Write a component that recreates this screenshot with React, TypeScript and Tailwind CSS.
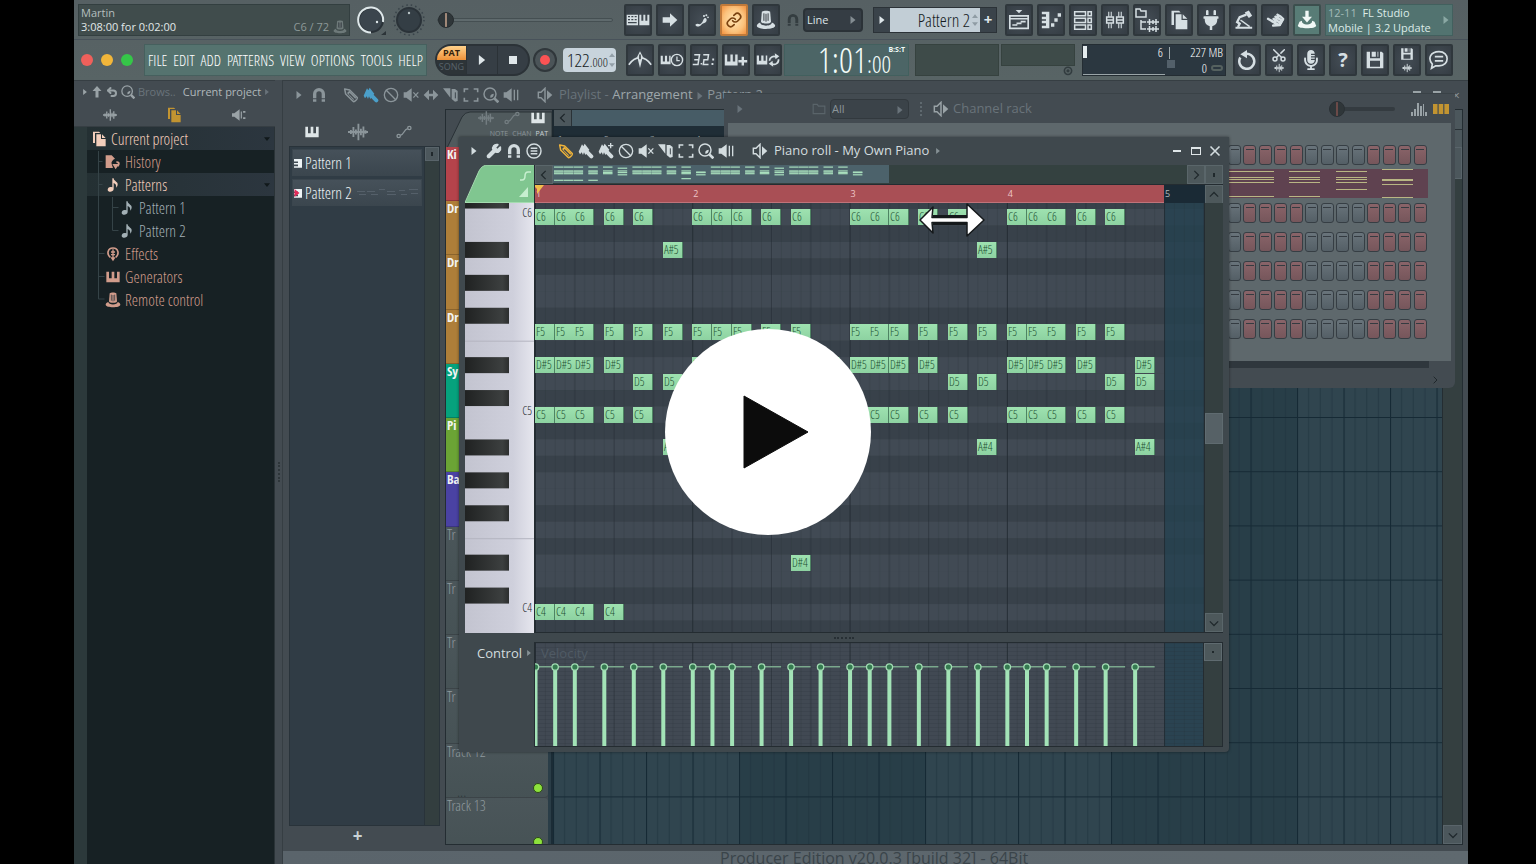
import React from "react";
import { Link, Wrench, Ban, Scissors, Undo2 } from "lucide-react";
import { FaMicrophoneAlt, FaPlug, FaHandPointer } from "react-icons/fa";

type IconProps = { className?: string };

function Svg({ className = "size-4", box = "0 0 24 24", children }: IconProps & { box?: string; children: React.ReactNode }) {
  return (
    <svg viewBox={box} className={className} fill="currentColor" aria-hidden="true">
      {children}
    </svg>
  );
}

/* ---------- icons ---------- */
const Keys = ({ className }: IconProps) => (
  <Svg className={className}><path d="M2 4h4v10h4V4h4v10h4V4h4v16H2z" /></Svg>
);
const Caret = ({ className = "size-2" }: IconProps) => (
  <Svg className={className} box="0 0 8 8"><path d="M1.500 0L6.500 4l-5 4z" /></Svg>
);
const Magnet = ({ className }: IconProps) => (
  <Svg className={className}><path d="M5.500 17v-6.500a6.500 6.500 0 0 1 13 0V17" fill="none" stroke="currentColor" strokeWidth="5" /><path d="M3 18.500h5V22H3zM16 18.500h5V22h-5z" /></Svg>
);
const Wave = ({ className }: IconProps) => (
  <Svg className={className}><path d="M0 12h24M3.500 9.500v5M6.500 6v12M9.500 9v6M12.500 2v20M15.500 8v8M18.500 5.500v13M21 10v4" stroke="currentColor" strokeWidth="2.200" /></Svg>
);
const Curve = ({ className }: IconProps) => (
  <Svg className={className}><g fill="none" stroke="currentColor" strokeWidth="2"><circle cx="4" cy="18" r="2.500" /><circle cx="20" cy="6" r="2.500" /><path d="M6.500 17C13 15 11 9 17.500 7" /></g></Svg>
);
const Files = ({ className }: IconProps) => (
  <Svg className={className}><path d="M3 1h9l2 2H6v15H3zM8 5h7v7h7v11H8zM16.500 5L22 10.500h-5.500z" /></Svg>
);
const Note = ({ className }: IconProps) => (
  <Svg className={className}><path d="M11 2h2c0 4 6 5 6 9 0 2-1 4-2 5 0-4-1-6-4-7v9c0 3-3 4-5 4s-4-1-4-3 2-4 4-4c1 0 2 0 3 .5z" /></Svg>
);
const Pencil = ({ className }: IconProps) => (
  <Svg className={className}><path d="M2.500 3l7.500 1.500 11 11c2 2-4 8-6 6l-11-11z" fill="none" stroke="currentColor" strokeWidth="2.200" strokeLinejoin="round" /><path d="M6 9L9.500 5.500 20 16l-1.500 1.500L10 9l-1.500 1.500 8 8-1 1z" /></Svg>
);
const Brush = ({ className, plus = false }: IconProps & { plus?: boolean }) => (
  <Svg className={className}><path d="M1 13L6 2l2 3 2-4 7 9-6 8-2-4-1.500 4-2-4L3 17z" /><path d="M13 13l7 7" stroke="currentColor" strokeWidth="6" strokeLinecap="round" />{plus && <path d="M18 0h2v3h3v2h-3v3h-2V5h-3V3h3z" />}</Svg>
);
const Speaker = ({ className, bars = false, cross = false }: IconProps & { bars?: boolean; cross?: boolean }) => (
  <Svg className={className}><path d="M1 8h4l8-6v20l-8-6H1z" />{bars && <path d="M16 4h2v16h-2zM21 4h2v16h-2z" />}{cross && <path d="M15.500 8L23 16M23 8l-7.500 8" stroke="currentColor" strokeWidth="2" />}</Svg>
);
const SpeakerOut = ({ className }: IconProps) => (
  <Svg className={className}><path d="M2 8h4l6-6v20l-6-6H2z" fill="none" stroke="currentColor" strokeWidth="2.200" /><path d="M15 5l8 7-8 7z" /></Svg>
);
const SlipArrow = ({ className }: IconProps) => (
  <Svg className={className}><path d="M1 12l8-8v6h6V4l8 8-8 8v-6H9v6z" /></Svg>
);
const Slice = ({ className }: IconProps) => (
  <Svg className={className}><path d="M0 2h11v14zM13 3h5l4 3v15l-4 1-5-4z" /><path d="M18.500 8v9" stroke="#3f484d" strokeWidth="1.500" /></Svg>
);
const Marquee = ({ className }: IconProps) => (
  <Svg className={className}><path d="M2 8V3h6M16 3h6v5M22 16v5h-6M8 21H2v-5" fill="none" stroke="currentColor" strokeWidth="2.400" /></Svg>
);
const Lens = ({ className }: IconProps) => (
  <Svg className={className}><circle cx="10.500" cy="10.500" r="9" fill="none" stroke="currentColor" strokeWidth="2.200" /><path d="M11 16a5 5 0 0 0 5-6l-3 1-2 2z" /><path d="M17 17l6 6" stroke="currentColor" strokeWidth="4" /></Svg>
);
const MenuRound = ({ className }: IconProps) => (
  <Svg className={className}><g fill="none" stroke="currentColor" strokeWidth="2.200"><circle cx="12" cy="12" r="10.500" /><path d="M7 8h10M7 12h10M7 16h10" /></g></Svg>
);
const Hat = ({ className }: IconProps) => (
  <Svg className={className}><path d="M7 2c2-1.500 8-1.500 10 0l1 12c0 3-12 3-12 0z" /><path d="M5 15c0 5 14 5 14 0 3 1 4 3 4 4 0 5-22 5-22 0 0-1 1-3 4-4z" /><path d="M9.500 4v9M12 4.500v9.500M14.500 4v9" stroke="#343b41" strokeWidth="1.200" /></Svg>
);
const Arrow = ({ className }: IconProps) => (
  <Svg className={className}><path d="M1 8h11V2l11 10-11 10v-6H1z" /></Svg>
);
const TypingKeys = ({ className }: IconProps) => (
  <Svg className={className} box="0 0 36 24"><path d="M1 4h17v16H1zM3 6v2h3V6zm5 0v2h3V6zm5 0v2h3V6zM3 10.500v2h3v-2zm5 0v2h3v-2zm5 0v2h3v-2zM3 15v2h13v-2z" fillRule="evenodd" /><path d="M20 4h3v9h3V4h3v9h3V4h3v16H20z" /></Svg>
);
const Foot = ({ className }: IconProps) => (
  <Svg className={className}><path d="M2 19c4-3 6 1 9-2 3-2 2-6 5-8 3-1 4 3 2 6-2 2-5 2-7 4-2 3-8 4-9 0z" /><circle cx="15" cy="6" r="1.600" /><circle cx="18.500" cy="5" r="1.500" /><circle cx="21" cy="8" r="1.300" /></Svg>
);
const MetroArc = ({ className }: IconProps) => (
  <Svg className={className} box="0 0 30 24"><path d="M1 18C5 12 9 9 15 9s10 3 14 9" fill="none" stroke="currentColor" strokeWidth="2" /><path d="M15 1l3.500 7L15 22l-3.500-14z" /><path d="M14 5h2v6h-2z" fill="#343b41" /></Svg>
);
const KeysClock = ({ className }: IconProps) => (
  <Svg className={className} box="0 0 34 24"><path d="M1 6h3v8h3V6h3v8h3V6h2v12H1z" /><circle cx="24" cy="12" r="8" fill="none" stroke="currentColor" strokeWidth="2" /><path d="M24 7v6h4" fill="none" stroke="currentColor" strokeWidth="1.800" /></Svg>
);
const KeysPlus = ({ className }: IconProps) => (
  <Svg className={className} box="0 0 30 24"><path d="M1 5h3v9h4V5h3v9h3V5h3v14H1z" /><path d="M22 8h3v4h4v3h-4v4h-3v-4h-4v-3h4z" /></Svg>
);
const KeysLoop = ({ className }: IconProps) => (
  <Svg className={className} box="0 0 32 24"><path d="M1 6h3v7h3V6h3v7h3V6h2v12H1z" /><path d="M18 13a6 6 0 0 1 9-5M30 11a6 6 0 0 1-9 6" fill="none" stroke="currentColor" strokeWidth="2.200" /><path d="M25 3l6 4-5 4zM23 21l-6-4 5-4z" /></Svg>
);
const Countdown = ({ className }: IconProps) => (
  <Svg className={className} box="0 0 32 24"><path d="M3 5h7l-2 13H1M3 11.500h6M15 5h7l-1 6.500h-5L15 18h7" fill="none" stroke="currentColor" strokeWidth="2" /><path d="M11.500 16h2v2h-2zM27 10h2.500v2.500H27zM26 16h2.500v2.500H26z" /></Svg>
);
const PlaylistIcon = ({ className }: IconProps) => (
  <Svg className={className}><path d="M8 0h8l-4 4z" /><path d="M1 7h22v15H1zM1 10.500h22" fill="none" stroke="currentColor" strokeWidth="2" /><path d="M4 17h6v2H4zM9 15h6v2H9zM14 13h6v2h-6z" /></Svg>
);
const PianoRollIcon = ({ className }: IconProps) => (
  <Svg className={className}><path d="M1 2h9v20H1v-3h5v-3H1v-3h5v-2H1V8h5V5H1zM12 16h4v4h-4zM16 10h4v4h-4zM20 4h4v4h-4z" /></Svg>
);
const RackIcon = ({ className }: IconProps) => (
  <Svg className={className}><g fill="none" stroke="currentColor" strokeWidth="1.800"><path d="M2 2h13v5H2zM2 10h13v5H2zM2 18h13v5H2zM18 2h4v5h-4zM18 10h4v5h-4zM18 18h4v5h-4z" /></g></Svg>
);
const MixerIcon = ({ className }: IconProps) => (
  <Svg className={className}><path d="M4.500 2v6M7.500 2v6M4.500 16v6M7.500 16v6M16.500 2v6M19.500 2v6M16.500 16v6M19.500 16v6" stroke="currentColor" strokeWidth="1.300" /><path d="M2 8.500h8v7H2zM14 8.500h8v7h-8zM2 12h8M14 12h8" fill="none" stroke="currentColor" strokeWidth="1.800" /></Svg>
);
const TreeIcon = ({ className }: IconProps) => (
  <Svg className={className}><path d="M1 1h4l1 2h5v6H1z" fill="none" stroke="currentColor" strokeWidth="1.500" /><path d="M6 12v9h5M6 14h5" fill="none" stroke="currentColor" strokeWidth="1.500" /><path d="M14.500 11v6M18 12v4M21 11v6M12 14h12M14.500 18v6M18 19v4M21 18v6M12 21h12" stroke="currentColor" strokeWidth="1.500" /></Svg>
);
const Tapper = ({ className }: IconProps) => (
  <Svg className={className}><path d="M3 20h20v2.500H3zM14 3l5-2.500L23 7l-4 2.500z" /><path d="M16 5.500L8 8.500l-3 6 3 2-2 4" fill="none" stroke="currentColor" strokeWidth="2.800" /><path d="M9 12l11 8" stroke="currentColor" strokeWidth="1.800" /></Svg>
);
const Download = ({ className }: IconProps) => (
  <Svg className={className}><path d="M10 1h4v7h4l-6 7-6-7h4zM3 14l3-1c-1 6 13 6 12 0l3 1 2 5c0 4-22 4-22 0z" /></Svg>
);
const Disk = ({ className }: IconProps) => (
  <Svg className={className}><path d="M2 2h4v8h12V2h2l2 2v18H2zM8 2h5v6H8zM15 2h1v6h-1zM6 13v7h12v-7z" fillRule="evenodd" /></Svg>
);
const CutWave = () => (
  <span className="flex flex-col items-center">
    <Scissors className="size-4 -rotate-90" strokeWidth={2.200} />
    <Wave className="size-2.5" />
  </span>
);
const DiskWave = () => (
  <span className="flex flex-col items-center gap-0.5">
    <Disk className="size-3.5" />
    <Wave className="size-2.5" />
  </span>
);
const PlugIn = ({ className }: IconProps) => (
  <Svg className={className}><path d="M0 9h4l9-7v20l-9-7H0zM15 6h2v12h-2zM19 5h4v3h-4zM19 16h4v3h-4z" /></Svg>
);
const HistoryIcon = ({ className }: IconProps) => (
  <Svg className={className}><path d="M1 2h9l5 5c-4 2-6 5-5 8l2 6H1z" /><path d="M11 15l10 0-5 8zM17 11c5-1 7 4 3 8l-2-1c2-3 2-5-1-5z" /></Svg>
);
const EffectsIcon = ({ className }: IconProps) => (
  <Svg className={className}><path d="M8 17C2 12 4 3 12 3s10 9 4 14" fill="none" stroke="currentColor" strokeWidth="2.500" /><path d="M9 8h6v2H9zM9 12h6v2H9zM11 5h2v12h-2zM8 17h8l-4 6z" /></Svg>
);
const PatternIcon = ({ className }: IconProps) => (
  <Svg className={className} box="0 0 10 12"><path d="M0 1h10v11H0v-2h5V8H0V6h5V4H0z" /></Svg>
);
const ChevronGlyph = ({ className = "size-3", turn }: IconProps & { turn: "left" | "right" | "up" | "down" }) => {
  const d = { left: "M8 1L3 6l5 5", right: "M4 1l5 5-5 5", up: "M1 8l5-5 5 5", down: "M1 4l5 5 5-5" }[turn];
  return <Svg className={className} box="0 0 12 12"><path d={d} fill="none" stroke="currentColor" strokeWidth="1.500" /></Svg>;
};

/* ---------- toolbar ---------- */
function ToolButton({ label, tone = "dark", children }: { label: string; tone?: "dark" | "hot" | "teal"; children: React.ReactNode }) {
  const tones = {
    dark: "border-[#2f373c] bg-[radial-gradient(#444d55,#353d44)] text-[#d6dfe3]",
    hot: "border-[#c07a3a] bg-[radial-gradient(#ffe6b4,#fbc27c_60%,#f3923f)] text-[#7a4210]",
    teal: "border-[#3c4f4e] bg-[#587c76] text-[#f1f8f6]",
  };
  return (
    <button type="button" aria-label={label} title={label} className={"flex h-8 w-7 shrink-0 items-center justify-center overflow-hidden rounded-xs border-2 " + tones[tone]}>
      {children}
    </button>
  );
}

const menuItems = ["FILE", "EDIT", "ADD", "PATTERNS", "VIEW", "OPTIONS", "TOOLS", "HELP"];

function Toolbar() {
  return (
    <header className="h-20 shrink-0 overflow-hidden bg-linear-to-b from-[#566063] to-[#586465] text-[#dfe7ea]">
      <div className="flex h-10 items-center border-b border-[#48525a] pl-1">
        <div className="flex h-8 w-[272px] shrink-0 flex-col justify-center border border-[#333f40] bg-[#404c4c] px-0.5 text-[11px] leading-[14px]">
          <span className="text-[#b4bfbf]">Martin</span>
          <span className="flex items-center justify-between">
            <span className="text-[#e0e8e8]">3:08:00 for 0:02:00</span>
            <span className="flex items-center gap-1 text-[#8d9998]">C6 / 72 <Hat className="size-3.5 text-[#6d7979]" /></span>
          </span>
        </div>
        <div className="flex w-[84px] shrink-0 items-center gap-1.5 pl-[5px]">
          <svg viewBox="0 0 32 32" className="size-8" role="img" aria-label="Master volume">
            <circle cx="16" cy="16" r="12" fill="#3b454d" stroke="#2a3238" strokeWidth="2" />
            <path d="M16 28.500A12.500 12.500 0 1 1 28 18" fill="none" stroke="#dfe8ea" strokeWidth="2" />
            <circle cx="22" cy="18" r="1.200" fill="#dfe8ea" />
            <path d="M31 27v4h-5z" fill="#2c3438" />
          </svg>
          <svg viewBox="0 0 32 32" className="size-8" role="img" aria-label="Master pitch">
            <circle cx="16" cy="16" r="15" fill="none" stroke="#39434a" strokeWidth="1.500" strokeDasharray="1.500 3" />
            <circle cx="16" cy="16" r="12" fill="#343e45" stroke="#2a3238" strokeWidth="2" />
            <circle cx="16" cy="9" r="1.200" fill="#b9c4c6" />
          </svg>
        </div>
        <div className="flex w-[190px] shrink-0 items-center pl-[3px]">
          <input type="range" aria-label="Song position" defaultValue={0} className="h-1 w-[176px] appearance-none rounded border border-[#454f52] bg-[#5f6a6d] [&::-webkit-slider-thumb]:size-4 [&::-webkit-slider-thumb]:appearance-none [&::-webkit-slider-thumb]:rounded-full [&::-webkit-slider-thumb]:border [&::-webkit-slider-thumb]:border-[#252b2e] [&::-webkit-slider-thumb]:bg-[linear-gradient(90deg,#2f3639_44%,#a08878_44%,#a08878_56%,#2f3639_56%)]" />
        </div>
        <div className="flex shrink-0 gap-1">
          <ToolButton label="Typing keyboard to piano"><TypingKeys className="h-5 w-6" /></ToolButton>
          <ToolButton label="Auto scroll"><Arrow className="size-4" /></ToolButton>
          <ToolButton label="Step edit"><Foot className="size-4" /></ToolButton>
          <ToolButton label="Link notes" tone="hot"><Link className="size-4" strokeWidth={2.500} /></ToolButton>
          <ToolButton label="Multilink controllers"><Hat className="size-5" /></ToolButton>
        </div>
        <Magnet className="ml-1.5 size-3.5 shrink-0 text-[#343d40]" />
        <div className="relative ml-[3px] h-6 w-[60px] shrink-0 rounded-sm border-2 border-[#2b3237] bg-[#353d44] text-[11px]">
          <select aria-label="Global snap" className="h-full w-full appearance-none bg-transparent pl-0.5 leading-4 text-[#dfe7ea] outline-none">
            <option>Line</option>
          </select>
          <Caret className="pointer-events-none absolute top-1.5 right-1 size-2 text-[#848d92]" />
        </div>
        <div className="ml-2.5 flex h-[26px] w-[124px] shrink-0 items-stretch border border-[#2b3237] bg-[#3a434a]">
          <button type="button" aria-label="Previous pattern" className="flex w-4 items-center justify-center"><Caret /></button>
          <label className="flex min-w-0 flex-1 items-center bg-[#c2ced6] text-[#151c22]">
            <span className="sr-only">Pattern</span>
            <input defaultValue="Pattern 2" className="h-6 w-full min-w-0 bg-transparent text-right font-['Open_Sans_Condensed_Light','Open_Sans_Condensed','Open_Sans',sans-serif] text-[18px] leading-6 font-light outline-none" />
            <span className="flex w-2.5 shrink-0 flex-col items-center gap-0.5 text-[#8f9ca4]"><Caret className="size-1.5 -rotate-90" /><Caret className="size-1.5 rotate-90" /></span>
          </label>
          <button type="button" aria-label="Add pattern" className="flex w-4 items-center justify-center text-[15px] font-bold">+</button>
        </div>
        <div className="ml-2 flex shrink-0 gap-1">
          <ToolButton label="Playlist"><PlaylistIcon className="size-5" /></ToolButton>
          <ToolButton label="Piano roll"><PianoRollIcon className="size-5" /></ToolButton>
          <ToolButton label="Channel rack"><RackIcon className="size-5" /></ToolButton>
          <ToolButton label="Mixer"><MixerIcon className="size-5" /></ToolButton>
          <ToolButton label="Browser"><TreeIcon className="size-6" /></ToolButton>
          <ToolButton label="Project picker"><Files className="size-5" /></ToolButton>
          <ToolButton label="Plugin picker"><FaPlug className="size-5" /></ToolButton>
          <ToolButton label="Tempo tapper"><Tapper className="size-5" /></ToolButton>
          <ToolButton label="Touch controller"><FaHandPointer className="size-4 rotate-[-60deg]" /></ToolButton>
          <ToolButton label="Download" tone="teal"><Download className="size-5" /></ToolButton>
        </div>
        <button type="button" className="ml-1 flex h-8 w-32 shrink-0 items-center border border-[#42605e] bg-[#527370] px-0.5 text-left text-[11px] leading-[15px] text-[#dcebe8]">
          <span className="flex-1 whitespace-nowrap"><span className="text-[#a3bbb8]">12-11</span>&nbsp; FL Studio<br />Mobile | 3.2 Update</span>
          <Caret className="size-2 text-[#8aa8a4]" />
        </button>
      </div>
      <div className="flex h-10 items-center">
        <div className="flex w-[70px] shrink-0 gap-2 pl-[7px]">
          <button type="button" aria-label="Close" className="size-3 rounded-full bg-[#f0605b]" />
          <button type="button" aria-label="Minimize" className="size-3 rounded-full bg-[#f2b63a]" />
          <button type="button" aria-label="Zoom" className="size-3 rounded-full bg-[#35c648]" />
        </div>
        <nav className="flex h-8 w-[283px] shrink-0 items-center justify-between border border-[#46605e] bg-[#55736f] px-[3px] font-['Open_Sans_Condensed_Light','Open_Sans_Condensed','Open_Sans',sans-serif] text-[15px] font-light text-white">
          {menuItems.map((m) => <button key={m} type="button">{m}</button>)}
        </nav>
        <div className="ml-2 flex h-8 w-[95px] shrink-0 overflow-hidden rounded-full border-2 border-[#2b3237] bg-[#363e45]">
          <div className="flex w-[30px] flex-col border-r border-[#2b3237] text-center text-[9px] leading-[14px]">
            <button type="button" className="flex-1 bg-linear-to-b from-[#ffd28a] to-[#ee9136] font-bold text-[#35220d]">PAT</button>
            <button type="button" className="flex-1 bg-[#2d3438] text-[#59636a]">SONG</button>
          </div>
          <button type="button" aria-label="Play" className="flex flex-1 items-center justify-center border-r border-[#2b3237]"><Caret className="size-2.5" /></button>
          <button type="button" aria-label="Stop" className="flex flex-1 items-center justify-center"><span className="size-2 bg-[#dfe7ea]" /></button>
        </div>
        <button type="button" aria-label="Record" className="ml-[3px] flex size-6 shrink-0 items-center justify-center rounded-full border-2 border-[#30373b] bg-[#4b5458]"><span className="size-2.5 rounded-full bg-[#fb5354]" /></button>
        <div role="spinbutton" aria-label="Tempo" aria-valuenow={122} className="ml-[6px] flex h-6 w-[53px] shrink-0 items-center justify-end rounded-sm bg-[#c8d4dc] font-['Open_Sans_Condensed_Light','Open_Sans_Condensed','Open_Sans',sans-serif] font-light text-[#151c22]">
          <span className="text-[19px] leading-5">122</span><span className="pt-1 text-[13px] leading-5">.000</span>
          <span className="flex w-2 flex-col items-center gap-1 text-[#93a0a8]"><Caret className="size-1.5 -rotate-90" /><Caret className="size-1.5 rotate-90" /></span>
        </div>
        <div className="ml-2.5 flex shrink-0 gap-1">
          <ToolButton label="Metronome"><MetroArc className="h-5 w-6" /></ToolButton>
          <ToolButton label="Wait for input"><KeysClock className="h-5 w-6" /></ToolButton>
          <ToolButton label="Countdown"><Countdown className="h-5 w-6" /></ToolButton>
          <ToolButton label="Blend recording"><KeysPlus className="h-5 w-6" /></ToolButton>
          <ToolButton label="Loop recording"><KeysLoop className="h-5 w-6" /></ToolButton>
        </div>
        <div className="ml-0.5 flex h-8 w-[125px] shrink-0 justify-end border border-[#42605e] bg-[#4c6566] pr-[3px] font-['Open_Sans_Condensed_Light','Open_Sans_Condensed','Open_Sans',sans-serif] leading-[30px] font-light text-[#f1fbf8]">
          <span className="text-[35px]">1:01</span>
          <span className="relative w-[38px] pt-1 text-[24px]">:00<span className="absolute top-0 right-0 font-['Open_Sans',sans-serif] text-[7px] leading-[10px] font-bold">B:S:T</span></span>
        </div>
        <div className="ml-1.5 h-8 w-[84px] shrink-0 border border-[#36423f] bg-[#3e4b49]" />
        <div className="ml-0.5 flex h-8 w-[74px] shrink-0 flex-col items-end">
          <div className="h-[23px] w-full border border-[#36423f] bg-[#3e4b49]" />
          <Svg className="mr-0.5 size-2.5 text-[#323c3f]"><circle cx="12" cy="12" r="9" fill="none" stroke="currentColor" strokeWidth="4" /><circle cx="12" cy="12" r="4" /></Svg>
        </div>
        <div className="ml-[7px] flex h-8 w-[144px] shrink-0 border border-[#242d33] bg-[#2b3740] font-['Open_Sans_Condensed_Light','Open_Sans_Condensed','Open_Sans',sans-serif] text-[13px] leading-[15px] text-white">
          <div className="flex w-[82px] justify-between border-b border-[#9aa5a8] pr-0.5"><span className="mt-px h-3 w-1 bg-[#e5ecee]" /><span>6</span></div>
          <div className="flex flex-1 flex-col pr-0.5">
            <span className="flex justify-between pl-1"><span className="mt-0.5 h-3 w-px bg-[#a0abad]" />227 MB</span>
            <span className="flex items-center justify-between pl-0.5"><span className="mb-2 size-2 bg-[#53606a]" /><span className="flex items-center gap-1">0<span className="h-1.5 w-3 rounded-full border-2 border-[#55615f]" /></span></span>
          </div>
        </div>
        <div className="ml-[7px] flex shrink-0 gap-1">
          <ToolButton label="Undo"><Svg className="size-5"><path d="M9 5a9 9 0 1 1-5 4" fill="none" stroke="currentColor" strokeWidth="3" /><path d="M12 0v10L4 5z" /></Svg></ToolButton>
          <ToolButton label="Cut"><CutWave /></ToolButton>
          <ToolButton label="Audio recording"><FaMicrophoneAlt className="size-5" /></ToolButton>
          <ToolButton label="Help"><span className="text-[20px] font-bold">?</span></ToolButton>
          <ToolButton label="Save"><Disk className="size-5" /></ToolButton>
          <ToolButton label="Export wave"><DiskWave /></ToolButton>
          <ToolButton label="Comments"><Svg className="size-5"><path d="M12 2c13 0 13 17 0 17-2 0-3 0-4 0l-5 3 1-5C-2 10 2 2 12 2zM7 8h10M7 13h10" fill="none" stroke="currentColor" strokeWidth="2" /></Svg></ToolButton>
        </div>
      </div>
    </header>
  );
}

/* ---------- browser ---------- */
const tree = [
  { name: "Current project", Icon: Files, pad: "pl-1", tone: "text-[#f3cebb]", open: true },
  { name: "History", Icon: HistoryIcon, pad: "pl-[18px]", tone: "text-[#d19c8b]", open: false },
  { name: "Patterns", Icon: Note, pad: "pl-[18px]", tone: "text-[#f3cebb]", open: true },
  { name: "Pattern 1", Icon: Note, pad: "pl-8", tone: "text-[#a3b0b5]", open: false },
  { name: "Pattern 2", Icon: Note, pad: "pl-8", tone: "text-[#a3b0b5]", open: false },
  { name: "Effects", Icon: EffectsIcon, pad: "pl-[18px]", tone: "text-[#d19c8b]", open: false },
  { name: "Generators", Icon: Keys, pad: "pl-[18px]", tone: "text-[#d19c8b]", open: false },
  { name: "Remote control", Icon: Hat, pad: "pl-[18px]", tone: "text-[#d19c8b]", open: false },
];

function Browser() {
  return (
    <aside className="flex w-[201px] shrink-0 flex-col bg-[#172124]">
      <div className="h-[47px] border-t border-b border-[#363e43] bg-[#434b51] text-[#9aa3a7]">
        <div className="flex h-[22px] items-center gap-[3px] pl-2 text-[11px]">
          <Caret className="size-1.5" />
          <Svg className="size-3"><path d="M12 0l9 10h-6v13H9V10H3z" /></Svg>
          <Undo2 className="size-3" strokeWidth={4} />
          <Lens className="size-3.5" />
          <span className="text-[#69737a]">Brows..</span>
          <span className="ml-1 text-[#b0b8bb]">Current project</span>
          <Caret className="size-1.5 text-[#69737a]" />
        </div>
        <div className="flex h-6 items-center justify-around px-1">
          <button type="button" aria-label="All"><Wave className="size-3.5" /></button>
          <button type="button" aria-label="Current project"><Files className="size-4 text-[#c29431]" /></button>
          <button type="button" aria-label="Plugins"><PlugIn className="size-3.5" /></button>
        </div>
      </div>
      <div className="flex flex-1 border-r border-[#2a3337]">
        <div className="w-[13px] shrink-0 bg-[#2c393b]" />
        <ul className="relative flex-1 font-['Open_Sans_Condensed_Light','Open_Sans_Condensed','Open_Sans',sans-serif] text-[16px] font-light">
          <svg viewBox="0 0 40 184" className="absolute top-0 left-0 h-[184px] w-10" fill="none" stroke="#354347" aria-hidden="true">
            <path d="M11.500 24v148h6M11.500 126.500h6M11.500 149.500h6M11.500 34.500h4M11.500 57.500h4M25.500 70v33.500h6M25.500 80.500h6" />
          </svg>
          {tree.map(({ name, Icon, pad, tone, open }) => (
            <li key={name} className={"flex h-[23px] items-center gap-1 pr-1 " + pad + " " + tone + (open ? " bg-linear-to-r from-[#243033] to-[#2c363f]" : "")}>
              <Icon className="size-4 shrink-0" />
              <span className="flex-1">{name}</span>
              {open && <Caret className="size-1.5 rotate-90 text-[#11191b]" />}
            </li>
          ))}
        </ul>
      </div>
    </aside>
  );
}

/* ---------- playlist ---------- */
const tracks = [
  { name: "Ki", color: "bg-[#b5434b]" },
  { name: "Dr", color: "bg-[#ae7e39]" },
  { name: "Dr", color: "bg-[#ae7e39]" },
  { name: "Dr", color: "bg-[#ae7e39]" },
  { name: "Sy", color: "bg-[#06a27d]" },
  { name: "Pi", color: "bg-[#6ba435]" },
  { name: "Ba", color: "bg-[#4a42a3]" },
  { name: "Tr", color: "" },
  { name: "Tr", color: "" },
  { name: "Tr", color: "" },
  { name: "Tr", color: "" },
  { name: "Track 12", color: "" },
  { name: "Track 13", color: "" },
];

function PlaylistGrid() {
  return (
    <svg className="h-full w-full" aria-hidden="true">
      <defs>
        <pattern id="pl-bars" width="46.500" height="54.200" patternUnits="userSpaceOnUse">
          <path d="M11.600 0v54M23.200 0v54M34.900 0v54" stroke="#1f343f" strokeOpacity=".7" />
          <path d="M.5 0v54.200M0 53.700h46.500" stroke="#162a35" strokeWidth="1.200" />
        </pattern>
        <pattern id="pl-shade" width="372" height="54" patternUnits="userSpaceOnUse">
          <rect width="372" height="54" fill="#30454f" /><rect x="186" width="186" height="54" fill="#283e48" />
        </pattern>
      </defs>
      <rect width="100%" height="100%" fill="url(#pl-shade)" />
      <rect width="100%" height="100%" fill="url(#pl-bars)" />
    </svg>
  );
}

function Playlist() {
  return (
    <section aria-label="Playlist" className="flex min-h-0 flex-1 flex-col border-t border-[#363e43] bg-[#434b51] text-[#8b959a]">
      <div className="flex h-7 shrink-0 items-center pl-3 text-[13px]">
        <Caret className="mr-2 size-2" />
        <Magnet className="mr-4 size-4" />
        <span className="flex gap-1">
          <Pencil /><Brush className="size-4 text-[#4b9fc9]" /><Ban className="size-4" /><Speaker cross /><SlipArrow /><Slice /><Marquee /><Lens /><Speaker bars />
        </span>
        <SpeakerOut className="mr-1.5 ml-[18px] size-4" />
        <h2 className="flex-1 whitespace-nowrap"><span className="text-[#69737a]">Playlist - </span><span className="text-[#9ea7ab]">Arrangement</span> <Caret className="inline size-2 text-[#69737a]" /> <span className="text-[#8b959a]">Pattern 2</span></h2>
        <span className="flex gap-3 pr-2"><span className="mt-0.5 h-0.5 w-2 bg-[#9aa3a7]" /><span className="mt-0.5 h-0.5 w-2 bg-[#9aa3a7]" /><span className="h-3 leading-3">×</span></span>
      </div>
      <div className="flex min-h-0 flex-1 pr-[5px] pl-1.5">
        <div className="flex w-[151px] shrink-0 flex-col">
          <div className="flex h-[37px] items-center gap-7 pt-2 pl-[15px]">
            <Keys className="size-4 text-[#dfe6e8]" /><Wave className="size-5" /><Curve className="size-4" />
          </div>
          <div className="flex flex-1 border border-[#29333a] bg-[#303c45]">
            <ul className="flex flex-1 flex-col gap-[3px] border-r border-[#29333a] p-0.5 font-['Open_Sans_Condensed_Light','Open_Sans_Condensed','Open_Sans',sans-serif] text-[16px] font-light text-[#eef4f6]">
              {["Pattern 1", "Pattern 2"].map((p, i) => (
                <li key={p}>
                  <button type="button" className="relative flex h-[27px] w-full items-center gap-[3px] border border-[#3b464e] bg-linear-to-b from-[#46515a] to-[#3b464e] pl-px">
                    <PatternIcon className="h-2.5 w-2" />
                    {i === 1 && <Caret className="absolute left-0 h-3 w-2 text-[#e32b5a]" />}
                    {p}
                    {i === 1 && <Svg className="absolute right-0 h-6 w-16 text-[#55606a]" box="0 0 64 24"><path d="M0 10h8v1H0zM10 10h8v1h-8zM22 8h6v1h-6zM30 10h8v1h-8zM42 9h6v1h-6zM52 8h9v1h-9zM2 13h7v1H2zM14 13h7v1h-7zM30 13h9v1h-9zM44 13h6v1h-6zM54 12h7v1h-7z" /></Svg>}
                  </button>
                </li>
              ))}
            </ul>
            <div className="w-[14px] bg-[#333e3f]"><div className="flex h-[14px] items-center justify-center border border-[#59646a] bg-[#4c575c]"><span className="h-1 w-0.5 bg-[#20282c]" /></div></div>
          </div>
          <button type="button" aria-label="Add pattern" className="flex h-[25px] items-start justify-center pt-0.5 pr-3.5 text-[17px] leading-4 font-bold text-[#c9d2d5]">+</button>
        </div>
        <div className="mb-1.5 ml-[5px] flex min-w-0 flex-1 flex-col border border-[#242d32]">
          <div className="flex h-[37px] shrink-0">
            <div className="relative w-[106px] shrink-0">
              <Svg className="absolute inset-0 h-10 w-[106px] text-[#505a5d]" box="0 0 106 40"><path d="M0 40L16 7q3-5 8-5h82v38z" stroke="#2a3237" /></Svg>
              <div className="relative flex justify-end gap-2.5 pr-1.5 text-[#737d81]"><Wave /><Curve /><Keys className="size-4 text-[#dfe6e8]" /></div>
              <div className="relative flex justify-end gap-1 pr-1 text-[7px] leading-4"><span>NOTE</span><span>CHAN</span><span className="text-[#c9d2d5]">PAT</span></div>
            </div>
            <div className="flex-1 border-l-2 border-[#1d2930] bg-[#1f2d36]">
              <div className="flex h-4 bg-[#475c66]"><div className="flex w-[18px] items-center justify-center border-r border-[#2a3237] bg-[#4c575c] text-[#1d2529]"><ChevronGlyph turn="left" className="size-2.5" /></div></div>
              <div className="flex h-5 items-end text-[8px] leading-4 text-[#b8c3c7]">
                {[1, 2, 3, 4].map((n) => <span key={n} className="w-[46px] pl-1">{n}</span>)}
              </div>
            </div>
            <div className="flex w-[19px] flex-col border-l border-[#242d32] bg-[#4c575c]"><div className="h-5 border-b border-[#2a3237]" /><div className="flex-1" /></div>
          </div>
          <div className="flex min-h-0 flex-1 overflow-hidden">
            <ul className="flex h-[705px] w-[102px] shrink-0 flex-col text-[13px] leading-[14px]">
              {tracks.map((t, i) => (
                <li key={i} className={"relative flex flex-1 flex-col justify-between rounded-r-sm border-b border-black/20 pl-px " + (t.color ? t.color + " font-['Open_Sans_Condensed','Open_Sans',sans-serif] font-bold text-[#f2f4f4]" : "bg-linear-to-b from-[#4b565a] to-[#465255] font-['Open_Sans_Condensed_Light','Open_Sans_Condensed','Open_Sans',sans-serif] text-[15px] font-light text-[#8f9a9e]")}>
                  <span>{t.name}</span>
                  {i > 10 && <span className="flex items-end justify-between pr-[5px] pl-2.5 leading-3 text-[#2c3639]">...<span className="mb-1 size-2.5 rounded-full border border-[#2c4a17] bg-[#8de23c]" /></span>}
                </li>
              ))}
            </ul>
            <div className="w-[5px] border-r-2 border-[#1b2c36] bg-[#2a3d47]" />
            <div className="min-w-0 flex-1 overflow-hidden"><PlaylistGrid /></div>
            <div className="flex w-[20px] flex-col justify-between border-l border-[#242d32] bg-[#343f40]">
              <div className="h-8 border border-[#59646a] bg-[#4c575c]" />
              <button type="button" aria-label="Scroll down" className="flex h-[19px] items-center justify-center border border-[#59646a] bg-[#4c575c] text-[#1f282c]"><ChevronGlyph turn="down" className="size-2.5" /></button>
            </div>
          </div>
        </div>
      </div>
    </section>
  );
}

/* ---------- channel rack ---------- */
function StepRow() {
  return (
    <div className="grid h-[29px] grid-cols-13 items-center">
      {Array.from({ length: 13 }, (_, i) => {
        const red = (i >= 1 && i <= 4) || i >= 9;
        return (
          <button key={i} type="button" aria-label={"Step " + (i + 4)} className={"flex h-5 w-[13px] justify-center rounded-[3px] border border-[#363e44] pt-[3px] " + (red ? "bg-linear-to-b from-[#8a6469] to-[#76565b]" : "bg-linear-to-b from-[#69747b] to-[#545f66]")}>
            <span className="h-px w-2 bg-[#343b41]" />
          </button>
        );
      })}
    </div>
  );
}

function ChannelRack() {
  return (
    <section aria-label="Channel rack" className="absolute top-[93px] left-[650px] flex w-[731px] flex-col rounded-b-md border-t border-[#3a4247] bg-[#434b51] px-1">
      <div className="flex h-[29px] items-center pl-2 text-[13px] text-[#69737a]">
        <Caret className="mr-[68px] size-2" />
        <Svg className="mr-1 size-3.5 text-[#5a646a]"><path d="M2 4h7l2 3h11v13H2z" fill="none" stroke="currentColor" strokeWidth="2" /></Svg>
        <div className="relative h-5 w-[79px] rounded-sm border border-[#32393e] bg-[#3b4349] text-[11px]">
          <select aria-label="Channel group" className="h-full w-full appearance-none bg-transparent pl-px leading-4 text-[#8b959a] outline-none"><option>All</option></select>
          <Caret className="pointer-events-none absolute top-1.5 right-1 size-2" />
        </div>
        <Svg className="mx-0.5 h-4 w-5 text-[#5f696f]" box="0 0 20 16"><path d="M9 1h2v2H9zM9 5h2v2H9zM9 9h2v2H9zM9 13h2v2H9z" /></Svg>
        <SpeakerOut className="mr-1 size-4 text-[#9aa3a7]" />
        <h2 className="flex-1">Channel rack</h2>
        <input type="range" aria-label="Swing" defaultValue={0} className="mr-4 h-1 w-[66px] appearance-none rounded bg-[#343b40] [&::-webkit-slider-thumb]:size-4 [&::-webkit-slider-thumb]:appearance-none [&::-webkit-slider-thumb]:rounded-full [&::-webkit-slider-thumb]:border [&::-webkit-slider-thumb]:border-[#2a3034] [&::-webkit-slider-thumb]:bg-[linear-gradient(90deg,#2f3639_44%,#6b4a48_44%,#6b4a48_56%,#2f3639_56%)]" />
        <Svg className="mr-1.5 size-4 text-[#9aa3a7]" box="0 0 16 14"><path d="M0 10h2v4H0zM3 7h2v7H3zM6 1h2v13H6zM9 4h2v10H9zM12 2h1v12h-1zM14 10h2v4h-2z" /></Svg>
        <Svg className="mr-0.5 size-4 text-[#c29431]" box="0 0 16 12"><path d="M0 1h4.500v10H0zM5.700 1h4.500v10H5.700zM11.400 1H16v10h-4.600z" /></Svg>
      </div>
      <div className="flex h-[238px] flex-col items-end bg-[#5e686c] pt-[17px] pr-[22px]">
        <div className="w-[201px]">
          <StepRow />
          <svg viewBox="0 0 200 29" className="block h-[29px] w-[200px]" role="img" aria-label="Piano pattern">
            <rect width="200" height="29" fill="#5f4250" />
            <g fill="#b9b684">
              {[{ x: 0, w: 46 }, { x: 61, w: 31 }, { x: 108, w: 31 }].map(({ x, w }) => (
                <g key={x}><rect x={x} y="2" width={w} height="1" /><rect x={x} y="8" width={w} height="1" /><rect x={x} y="10" width={w} height="1" /><rect x={x} y="13" width={w} height="1" /></g>
              ))}
              <rect x="0" y="27" width="46" height="1" /><rect x="61" y="27" width="31" height="1" /><rect x="108" y="20" width="31" height="1" />
              <rect x="154" y="0" width="31" height="1" /><rect x="154" y="10" width="31" height="2" /><rect x="154" y="15" width="31" height="1" /><rect x="154" y="28" width="31" height="1" />
            </g>
          </svg>
          {Array.from({ length: 5 }, (_, i) => <StepRow key={i} />)}
        </div>
      </div>
      <div className="mr-[22px] h-[7px] bg-[#2f373d]" />
      <div className="flex h-5 items-center justify-end pt-1 pr-3 text-[#20282c]"><ChevronGlyph turn="right" className="size-2" /></div>
    </section>
  );
}

/* ---------- piano roll ---------- */
const STEP = 9.83;
const ROW = 16.46;
const TOP_NOTE = 84;
const ROW_OFFSET = 6;
const names = ["C", "C#", "D", "D#", "E", "F", "F#", "G", "G#", "A", "A#", "B"];
const noteName = (n: number) => names[n % 12] + (Math.floor(n / 12) - 1);

const phrase: [number, number[]][] = [
  [84, [0, 2, 4, 7, 10, 16, 18, 20, 23, 26, 32, 34, 36, 39, 42, 48, 50, 52, 55, 58]],
  [82, [13, 45]],
  [77, [0, 2, 4, 7, 10, 13, 16, 18, 20, 23, 26, 32, 34, 36, 39, 42, 45, 48, 50, 52, 55, 58]],
  [75, [0, 2, 4, 7, 16, 18, 20, 23, 29, 32, 34, 36, 39, 48, 50, 52, 55, 61]],
  [74, [10, 13, 26, 29, 42, 45, 58, 61]],
  [72, [0, 2, 4, 7, 10, 16, 18, 20, 23, 26, 32, 34, 36, 39, 42, 48, 50, 52, 55, 58]],
  [70, [13, 29, 45, 61]],
  [63, [26]],
  [60, [0, 2, 4, 7]],
];
const notes = phrase.flatMap(([pitch, starts]) => starts.map((start) => ({ pitch, start })));
const hits = [0, 2, 4, 7, 10, 13, 16, 18, 20, 23, 26, 29, 32, 34, 36, 39, 42, 45, 48, 50, 52, 55, 58, 61];
const rowTop = (n: number) => ROW_OFFSET + (TOP_NOTE - n) * ROW;
const pitches = Array.from({ length: 27 }, (_, i) => 85 - i);

function PianoKeys() {
  return (
    <svg viewBox="0 0 69 430" className="h-[430px] w-[69px]" role="img" aria-label="Piano keys">
      <defs>
        <linearGradient id="white" x2="1"><stop stopColor="#c3c4d0" /><stop offset=".7" stopColor="#cfd0dc" /><stop offset="1" stopColor="#e6e6ee" /></linearGradient>
        <linearGradient id="black" x2="1"><stop stopColor="#202222" /><stop offset=".85" stopColor="#3c3f3f" /><stop offset="1" stopColor="#2c2e2e" /></linearGradient>
        <linearGradient id="root" x2="1"><stop stopColor="#a5a6ae" /><stop offset="1" stopColor="#b9bac2" /></linearGradient>
      </defs>
      <rect width="69" height="430" fill="url(#white)" />
      {[84, 72, 60].map((n) => <rect key={n} y={rowTop(n) - 8} width="69" height={ROW + 8} fill="url(#root)" />)}
      {[77, 65].map((n) => <rect key={n} y={rowTop(n) + ROW} width="69" height="1" fill="#b4b5c0" />)}
      {pitches.filter((n) => [1, 3, 6, 8, 10].includes(n % 12)).map((n) => <rect key={n} y={rowTop(n)} width="44" height="16" fill="url(#black)" />)}
    </svg>
  );
}

function GridLines({ id, fine = false }: { id: string; fine?: boolean }) {
  return (
    <svg className="absolute inset-0 h-full w-full" aria-hidden="true">
      <defs>
        <pattern id={id} width={STEP * 16} height="12" patternUnits="userSpaceOnUse">
          {Array.from({ length: 16 }, (_, i) => (
            <rect key={i} x={i * STEP} width="1" height="12" fill="#20282f" fillOpacity={i === 0 ? 0.85 : i % 4 === 0 ? 0.5 : 0.2} />
          ))}
          {fine && <path d="M0 .5h160M0 4.500h160M0 8.500h160" stroke="#20282f" strokeOpacity=".15" />}
        </pattern>
      </defs>
      {!fine && pitches.map((n) => (
        <rect key={n} y={rowTop(n)} width="100%" height={ROW} fill={[1, 4, 6, 9, 11].includes(n % 12) ? "#38414a" : "#414a54"} />
      ))}
      <rect x={STEP * 64} width="100%" height="100%" fill="#234250" fillOpacity=".75" />
      <rect width="100%" height="100%" fill={"url(#" + id + ")"} />
    </svg>
  );
}

function ScrollButton({ turn, label }: { turn: "left" | "right" | "up" | "down"; label: string }) {
  return (
    <button type="button" aria-label={label} className="flex h-[19px] w-[18px] shrink-0 items-center justify-center border border-[#5a666a] bg-[#4d585b] text-[#20292c]">
      <ChevronGlyph turn={turn} className="size-2.5" />
    </button>
  );
}

function PianoRoll() {
  return (
    <section aria-label="Piano roll" className="absolute top-[137px] left-[385px] flex w-[770px] flex-col rounded-br bg-[#3f484d] pr-1.5 pb-[5px] pl-1.5 text-[#d3dcdf] shadow-[0_0_3px_rgba(0,0,0,0.5)]">
      <div className="flex h-7 items-center pl-[5px] text-[13px]">
        <Caret className="mr-2 size-2" />
        <span className="mr-4 flex gap-1"><Wrench className="size-4" fill="currentColor" /><Magnet /><MenuRound /></span>
        <span className="flex gap-1"><Pencil className="size-4 text-[#f0b43a]" /><Brush /><Brush plus /><Ban className="size-4" /><Speaker cross /><Slice /><Marquee /><Lens /><Speaker bars /></span>
        <SpeakerOut className="mr-1.5 ml-[18px] size-4" />
        <h2 className="flex flex-1 items-center gap-1.5 whitespace-nowrap">Piano roll - My Own Piano <Caret className="size-1.5 text-[#869095]" /></h2>
        <button type="button" aria-label="Minimize" className="mr-2.5 h-3"><span className="block h-0.5 w-2 bg-[#dfe6e8]" /></button>
        <button type="button" aria-label="Maximize" className="mr-2 h-2 w-2.5 border border-t-2 border-[#dfe6e8]" />
        <button type="button" aria-label="Close" className="mr-0.5"><Svg className="size-3" box="0 0 12 12"><path d="M1.500 1.500l9 9M10.500 1.500l-9 9" stroke="currentColor" strokeWidth="1.600" /></Svg></button>
      </div>
      <div className="flex">
        <div className="w-[69px] shrink-0">
          <svg viewBox="0 0 69 38" className="block h-[38px] w-[69px]" aria-hidden="true">
            <path d="M0 38L14 6q3-6 9-6h46v38z" fill="#80c690" />
            <path d="M0 37.500L14 6q3-6 9-6h46M0 37.500h69" fill="none" stroke="#a5dcb0" />
            <path d="M55 15h2q3 0 3-4t3-4h3" fill="none" stroke="#c7efd0" strokeWidth="1.500" />
            <path d="M63 22v10H54z" fill="#c7efd0" />
          </svg>
          <div className="relative">
            <PianoKeys />
            {[84, 72, 60].map((n) => <span key={n} className="absolute right-0.5 font-['Open_Sans_Condensed_Light','Open_Sans_Condensed','Open_Sans',sans-serif] text-[12px] leading-4 font-light text-[#22262b]" style={{ top: Math.round(rowTop(n) - 4) }}>{noteName(n)}</span>)}
          </div>
        </div>
        <div className="min-w-0 flex-1 border-l border-[#242c31]">
          <div className="flex h-[19px] bg-[#344140]">
            <ScrollButton turn="left" label="Scroll left" />
            <svg viewBox="0 0 336 18" className="h-[18px] w-[336px] bg-[#4c626b]" role="img" aria-label="Note overview">
              {notes.map((n, i) => <rect key={i} x={1 + n.start * 4.9} y={1.500 + (84 - n.pitch) * 0.55} width="9.500" height="1.200" fill="#a9dfbd" />)}
            </svg>
            <span className="flex-1" />
            <ScrollButton turn="right" label="Scroll right" />
            <button type="button" aria-label="Zoom" className="flex h-[19px] w-[18px] items-center justify-center border border-[#5a666a] bg-[#4d585b]"><span className="h-1 w-0.5 bg-[#20292c]" /></button>
          </div>
          <div className="flex h-[19px] border-t border-[#242c31] bg-[#1a2a35]">
            <div className="relative flex w-[629px] shrink-0 border-b border-[#c0737a] bg-[#a94f55] text-[9px] leading-[18px] text-[#eec5c6]">
              {[1, 2, 3, 4].map((n) => <span key={n} className="flex-1 pl-px">{n}</span>)}
              <Svg className="absolute top-0 left-0 h-2.5 w-2.5 text-[#f2bd4b]" box="0 0 10 10"><path d="M0 0h9L2 9V4L0 2z" /></Svg>
            </div>
            <span className="flex-1 pl-px text-[9px] leading-[18px] text-[#aeb9bd]">5</span>
            <ScrollButton turn="up" label="Scroll up" />
          </div>
          <div className="flex h-[430px] border-b border-[#242c31]">
            <div className="relative min-w-0 flex-1 overflow-hidden">
              <GridLines id="roll" />
              {notes.map((n, i) => (
                <span key={i} className="absolute h-4 w-5 overflow-hidden border-r border-[#4e8463] bg-[#96dba9] bg-linear-to-b from-[#9ee2b0] to-[#8dd2a1] pl-px font-['Open_Sans_Condensed_Light','Open_Sans_Condensed','Open_Sans',sans-serif] text-[12px] leading-4 font-light text-[#1f5234]" style={{ left: Math.round(n.start * STEP), top: Math.round(rowTop(n.pitch)) }}>
                  {noteName(n.pitch)}
                </span>
              ))}
              <svg viewBox="0 0 66 36" className="absolute h-9 w-[66px]" style={{ left: 384, top: -1 }} aria-hidden="true">
                <path d="M14 18h38" stroke="#15191b" strokeWidth="10" />
                <path d="M1 18L14 5l-1 10.500h35L48 2l17 16-17 16V20.500H13L14 31z" fill="#fff" stroke="#15191b" strokeWidth="1.500" strokeLinejoin="round" />
              </svg>
            </div>
            <div className="flex w-[19px] flex-col justify-between border-l border-[#242c31] bg-[#343f40]">
              <span />
              <div className="mt-10 h-[31px] border border-[#5f6b70] bg-[#566166]" />
              <ScrollButton turn="down" label="Scroll down" />
            </div>
          </div>
        </div>
      </div>
      <div className="flex h-[9px] items-center justify-center"><span className="w-5 border-t-2 border-dotted border-[#272f34]" /></div>
      <div className="flex h-[105px]">
        <div className="flex w-[69px] shrink-0 items-start justify-end gap-1 pr-0.5 text-[13px] leading-[22px]">Control <Caret className="mt-2 size-1.5 text-[#869095]" /></div>
        <div className="flex min-w-0 flex-1 border border-[#242c31]">
          <div className="relative min-w-0 flex-1 overflow-hidden bg-[#414953]">
            <GridLines id="vel" fine />
            <span className="absolute left-1.5 text-[13px] leading-[20px] text-[#505b65]">Velocity</span>
            <svg className="absolute inset-0 h-full w-full" role="img" aria-label="Note velocities">
              {hits.map((s) => {
                const x = s * STEP + 0.5;
                return (
                  <g key={s}>
                    <rect x={x} y="23" width="19.500" height="1.500" fill="#7ba98d" />
                    <rect x={x - 2} y="23" width="4" height="81" fill="#a3e3b7" />
                    <circle cx={x} cy="24" r="3.200" fill="#357a50" stroke="#a3dcb4" strokeWidth="1.300" />
                  </g>
                );
              })}
            </svg>
          </div>
          <div className="w-[19px] border-l border-[#242c31] bg-[#343f40]"><div className="flex h-[18px] items-center justify-center border border-[#5f6b70] bg-[#4d585b]"><span className="size-0.5 bg-[#20292c]" /></div></div>
        </div>
      </div>
    </section>
  );
}

export default function App() {
  return (
    <div className="h-screen bg-black pr-[68px] pl-[74px] font-['Open_Sans','Noto_Sans',sans-serif]">
      <main className="relative flex h-full flex-col overflow-hidden bg-[#434b51]">
        <Toolbar />
        <div className="flex min-h-0 flex-1">
          <Browser />
          <div className="flex w-2 shrink-0 items-center justify-center border-r border-[#363e43] bg-[#434b51]"><span className="h-5 border-l-2 border-dotted border-[#2e363a]" /></div>
          <div className="flex min-w-0 flex-1 flex-col">
            <Playlist />
            <footer className="h-[13px] shrink-0 overflow-hidden bg-linear-to-r from-[#5a646b] to-[#5f696f] pl-[437px] text-[16px] leading-[14px] whitespace-nowrap text-[#3a444a]">Producer Edition v20.0.3 [build 32] - 64Bit</footer>
          </div>
        </div>
        <ChannelRack />
        <PianoRoll />
      </main>
      <button type="button" aria-label="Play video" className="fixed inset-0 m-auto flex size-[206px] items-center justify-center rounded-full bg-white">
        <svg viewBox="0 0 66 74" className="ml-4 h-[74px] w-[66px]" aria-hidden="true"><path d="M1 1v72l64-36z" fill="#0c0c0c" stroke="#0c0c0c" strokeLinejoin="round" /></svg>
      </button>
    </div>
  );
}
